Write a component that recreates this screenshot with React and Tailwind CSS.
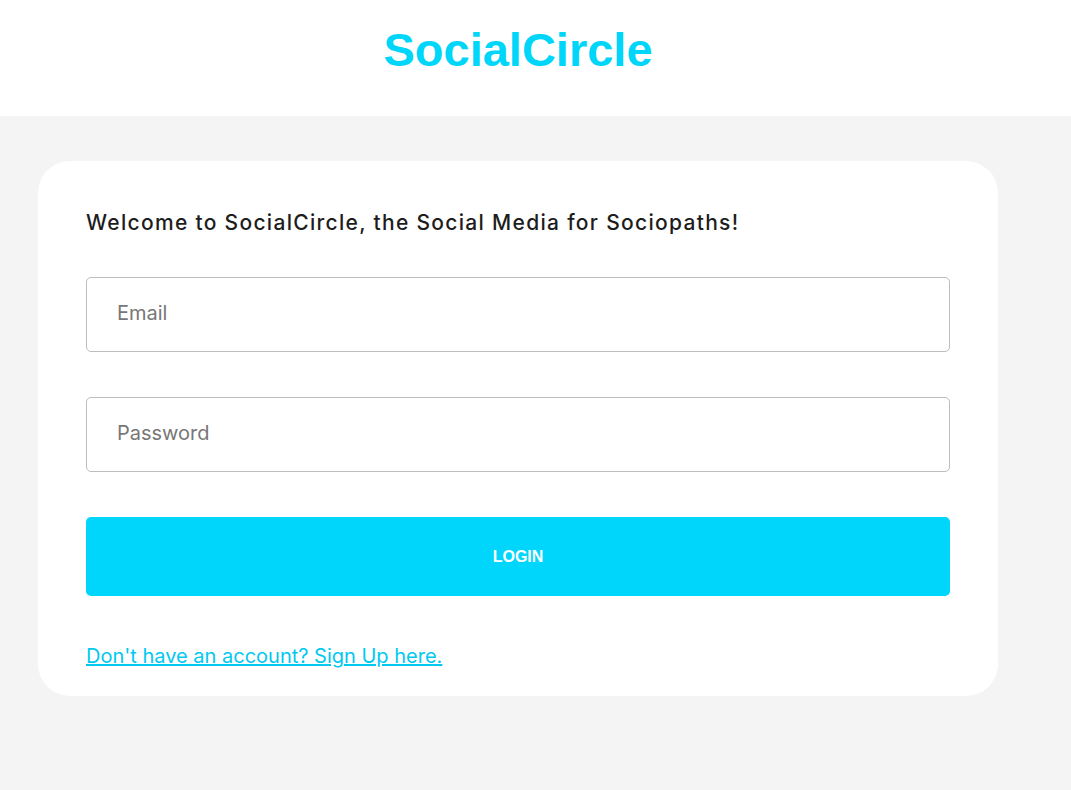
export default function App() {
  return (
    <div className="min-h-[790px] bg-[#f4f4f4] font-['Inter','Liberation_Sans',sans-serif]">
      {/* Header */}
      <header className="bg-white h-[116px]">
        <div className="w-[960px] ml-[38px] h-full flex items-center justify-center">
          <h1 className="text-[47px] font-bold text-[#00d5fa] font-['Liberation_Sans',sans-serif] leading-none -mt-[18px]">
            SocialCircle
          </h1>
        </div>
      </header>

      {/* Login card */}
      <main className="pt-[45px]">
        <div className="w-[960px] ml-[38px] bg-white rounded-[32px] px-[48px] pt-[48px] pb-[26px]">
          <p className="text-[21px] font-medium tracking-[1.3px] text-[#1d1d1d] leading-[28px]">
            Welcome to SocialCircle, the Social Media for Sociopaths!
          </p>

          <form className="mt-[40px] flex flex-col" onSubmit={(e) => e.preventDefault()}>
            <input
              type="email"
              placeholder="Email"
              className="h-[75px] w-full rounded-[5px] border border-[#bdbdbd] px-[30px] pb-[4px] text-[20px] text-[#333] placeholder:text-[#777] outline-none"
            />
            <input
              type="password"
              placeholder="Password"
              className="mt-[45px] h-[75px] w-full rounded-[5px] border border-[#bdbdbd] px-[30px] pb-[4px] text-[20px] text-[#333] placeholder:text-[#777] outline-none"
            />
            <button
              type="submit"
              className="mt-[45px] h-[79px] w-full rounded-[5px] bg-[#00d6fb] text-white text-[16px] font-bold font-['Liberation_Sans',sans-serif]"
            >
              LOGIN
            </button>
          </form>

          <a href="#" className="mt-[46px] inline-block text-[20px] text-[#00c9f0] underline leading-[28px]">
            Don't have an account? Sign Up here.
          </a>
        </div>
      </main>
    </div>
  );
}
